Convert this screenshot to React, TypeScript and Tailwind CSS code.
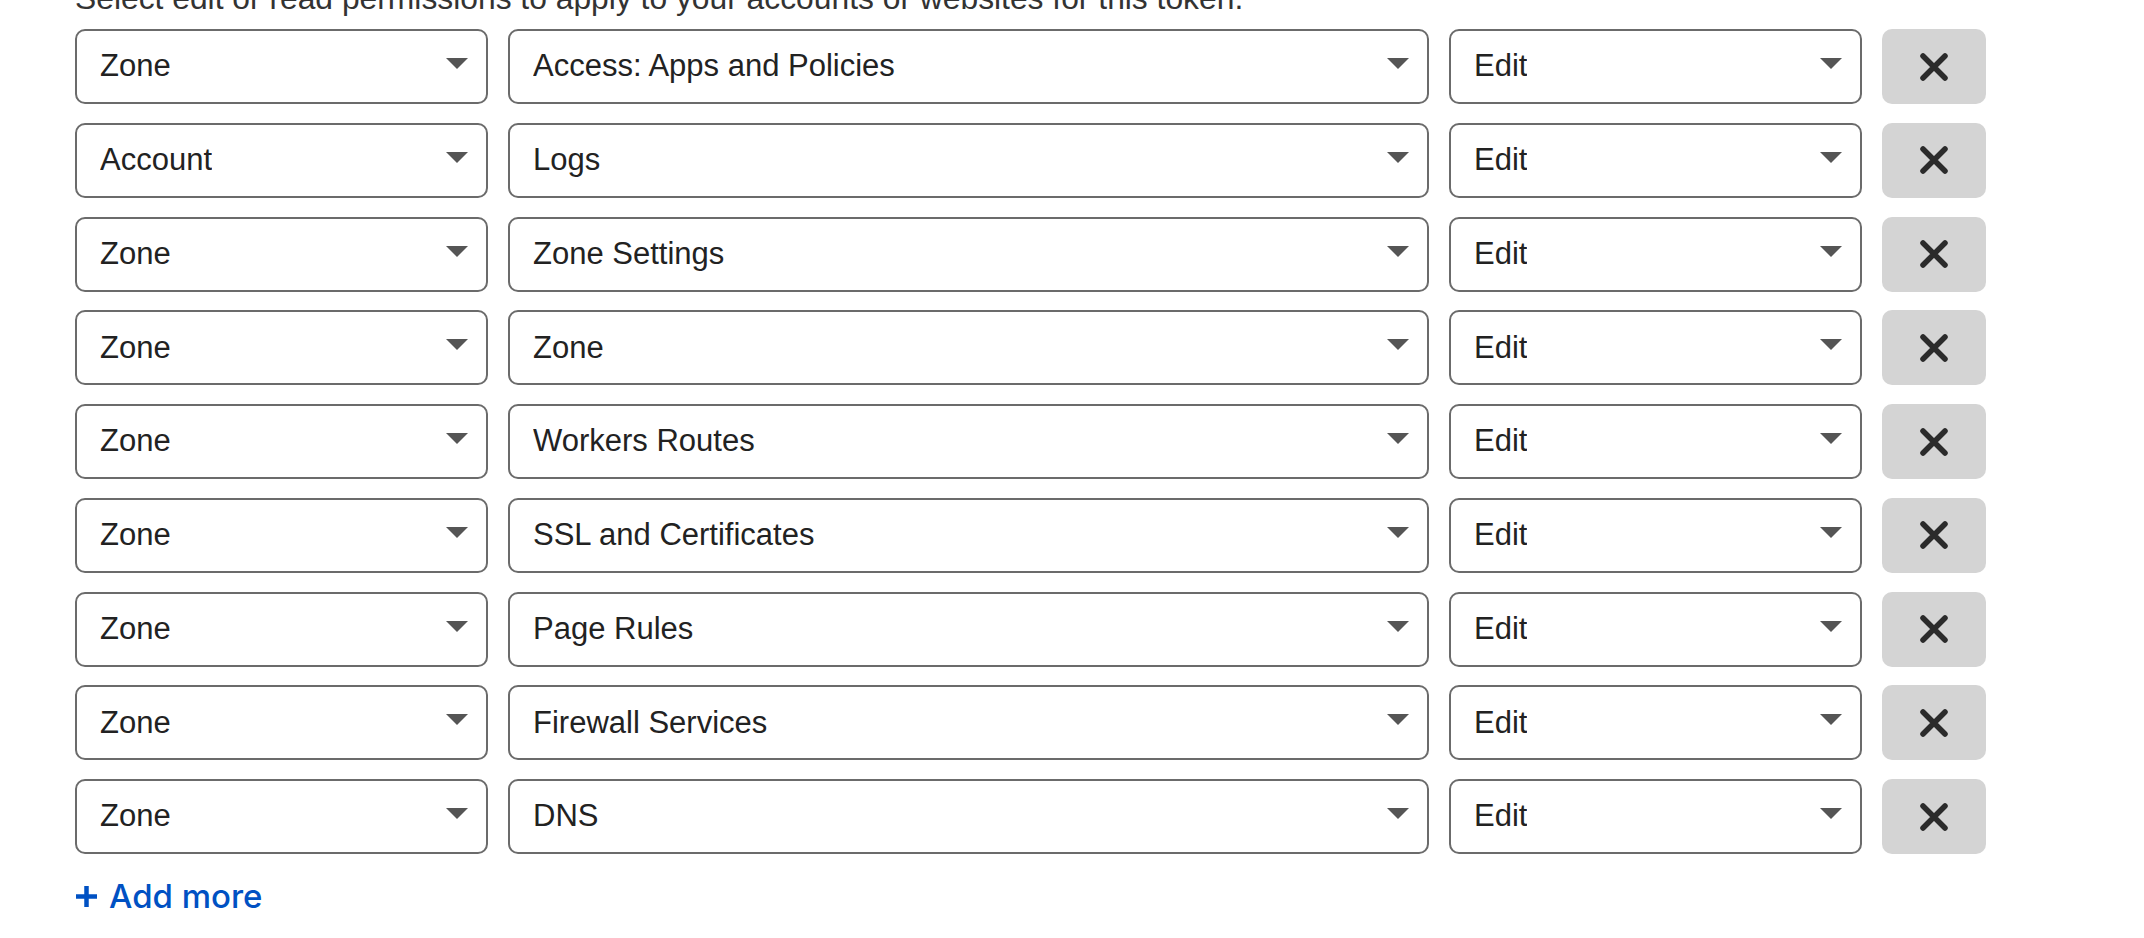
import React from 'react';

type Row = { scope: string; perm: string; level: string };

const rows: Row[] = [
  { scope: 'Zone', perm: 'Access: Apps and Policies', level: 'Edit' },
  { scope: 'Account', perm: 'Logs', level: 'Edit' },
  { scope: 'Zone', perm: 'Zone Settings', level: 'Edit' },
  { scope: 'Zone', perm: 'Zone', level: 'Edit' },
  { scope: 'Zone', perm: 'Workers Routes', level: 'Edit' },
  { scope: 'Zone', perm: 'SSL and Certificates', level: 'Edit' },
  { scope: 'Zone', perm: 'Page Rules', level: 'Edit' },
  { scope: 'Zone', perm: 'Firewall Services', level: 'Edit' },
  { scope: 'Zone', perm: 'DNS', level: 'Edit' },
];

const Caret: React.FC = () => (
  <svg width="22" height="11" viewBox="0 0 22 11" className="mb-[6px] shrink-0">
    <polygon points="0,0 22,0 11,11" fill="#555555" />
  </svg>
);

const FakeSelect: React.FC<{ value: string; className: string }> = ({ value, className }) => (
  <div
    className={`flex h-[75px] items-center justify-between rounded-[10px] border-2 border-[#6b6b6b] bg-white pl-[23px] pr-[18px] ${className}`}
  >
    <span className="truncate text-[31px] text-[#222222]">{value}</span>
    <Caret />
  </div>
);

const App: React.FC = () => {
  return (
    <div className="min-h-[938px] overflow-hidden bg-white pl-[75px] font-['Liberation_Sans',Arial,sans-serif]">
      <p className="-mt-[22px] text-[31.8px] leading-[40px] text-[#333333]">
        Select edit or read permissions to apply to your accounts or websites for this token.
      </p>

      <div className="mt-[11px] flex flex-col gap-[18.75px]">
        {rows.map((row, i) => (
          <div key={i} className="flex gap-5">
            <FakeSelect value={row.scope} className="w-[413px]" />
            <FakeSelect value={row.perm} className="w-[921px]" />
            <FakeSelect value={row.level} className="w-[413px]" />
            <button
              type="button"
              aria-label="Remove"
              className="flex h-[75px] w-[104px] items-center justify-center rounded-[10px] bg-[#d4d4d4]"
            >
              <svg width="30" height="30" viewBox="0 0 30 30">
                <path d="M4 4 L26 26 M26 4 L4 26" stroke="#2b2b2b" strokeWidth="5.5" strokeLinecap="round" />
              </svg>
            </button>
          </div>
        ))}
      </div>

      <button
        type="button"
        className="mt-[22px] flex items-center gap-[11px] text-[33px] font-medium leading-[40px] text-[#0051c3] font-['Inter',sans-serif]"
      >
        <svg width="23" height="23" viewBox="0 0 23 23">
          <path d="M11.5 1 V22 M1 11.5 H22" stroke="#0051c3" strokeWidth="4.5" />
        </svg>
        <span>Add more</span>
      </button>
    </div>
  );
};

export default App;
